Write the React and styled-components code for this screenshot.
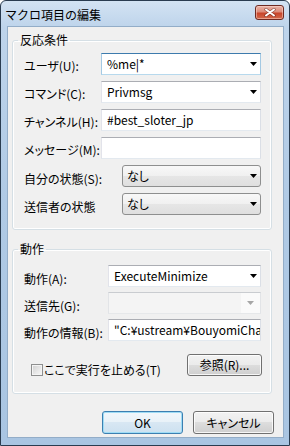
import styled, { createGlobalStyle, css } from 'styled-components'

const GlobalStyle = createGlobalStyle`
  html, body {
    margin: 0;
    padding: 0;
    background: #ffffff;
  }
  body {
    font-family: "Noto Sans CJK JP", "Noto Sans", sans-serif;
    font-size: 12px;
    font-feature-settings: "palt" 1;
    color: #000;
  }
  * { box-sizing: border-box; }
`

const Window = styled.div`
  width: 290px;
  height: 446px;
  border: 1px solid #2a3c50;
  border-radius: 6px 6px 0 0;
  background: linear-gradient(180deg, #d3e3f3 0px, #bed4eb 26px, #b0cae5 200px, #a9c5e2 100%);
  display: flex;
  flex-direction: column;
  overflow: hidden;
`

const TitleBar = styled.div`
  height: 26px;
  flex: none;
  display: flex;
  align-items: center;
  justify-content: space-between;
  padding: 0 5px 0 4px;
`

const Title = styled.span`
  font-size: 12px;
  line-height: 16px;
  padding-top: 1px;
  color: #000;
  font-feature-settings: normal;
`

const CloseButton = styled.div`
  align-self: flex-start;
  margin-top: 4px;
  width: 29px;
  height: 15px;
  border: 1px solid #6e2a22;
  border-radius: 3px;
  background: linear-gradient(180deg, #eab4a8 0%, #dc8b79 45%, #c8452b 55%, #d2694c 100%);
  box-shadow: inset 0 0 0 1px rgba(255, 220, 210, 0.5);
  display: flex;
  align-items: center;
  justify-content: center;
`

const Client = styled.div`
  flex: 1;
  margin: 0 6px 8px 7px;
  background: #f0f0f0;
  box-shadow: 0 0 0 1px #93adc8;
  display: flex;
  flex-direction: column;
  padding: 5px 9px 0 4px;
`

const Group = styled.fieldset`
  margin: ${p => p.$mt || 0}px 2px 0 0;
  padding: ${p => p.$pt}px 10px ${p => p.$pb}px 11px;
  border: 1px solid #d5dfe5;
  border-radius: 3px;
  box-shadow: inset 0 0 0 1px #ffffff;
  min-width: 0;
`

const Legend = styled.legend`
  margin-left: -6px;
  padding: 0 2px;
  font-size: 12px;
  line-height: 16px;
`

const Rows = styled.div`
  display: flex;
  flex-direction: column;
  gap: ${p => p.$gap}px;
`

const Row = styled.div`
  display: grid;
  grid-template-columns: ${p => p.$label}px 1fr;
  align-items: center;
  height: 22px;
`

const Label = styled.span`
  white-space: nowrap;
  font-size: 12px;
  line-height: 16px;
  padding-top: ${p => p.$drop || 3}px;
`

const fieldBorders = {
  edit: css`
    background: #ffffff;
    border-color: #abadb3 #dbdfe6 #e3e9ef #e2e3ea;
  `,
  focus: css`
    background: #ffffff;
    border-color: #3d7bad #a4c9e3 #b7d9ed #a4c9e3;
  `,
  list: css`
    border-color: #8e8f8f;
    border-radius: 3px;
    background: linear-gradient(180deg, #f8f8f8 0%, #f0f0f0 50%, #e6e6e6 50%, #dfdfdf 100%);
  `,
  disabled: css`
    background: #f4f4f4;
    border-color: #c9ccd0 #e2e4e7 #e6e8ea #e2e4e7;
  `,
}

const Field = styled.div`
  height: 22px;
  border: 1px solid;
  display: flex;
  align-items: center;
  padding-left: ${p => p.$pad ?? 5}px;
  min-width: 0;
  ${p => fieldBorders[p.$variant || 'edit']}
`

const FieldText = styled.span`
  flex: 1;
  min-width: 0;
  overflow: hidden;
  white-space: nowrap;
  font-size: 12px;
  line-height: 18px;
`

const ArrowBox = styled.span`
  flex: none;
  width: ${p => p.$w || 14}px;
  height: 100%;
  display: flex;
  align-items: center;
  justify-content: center;
  background: ${p => p.$bg || 'transparent'};
`

const ActionRow = styled.div`
  display: flex;
  justify-content: space-between;
  align-items: flex-start;
  margin-top: 13px;
`

const CheckLabel = styled.label`
  display: flex;
  align-items: center;
  margin: 8px 0 0 7px;
  font-size: 12px;
  line-height: 16px;
`

const CheckBox = styled.span`
  width: 12px;
  height: 12px;
  margin-right: 1px;
  border: 1px solid #8e8f8f;
  background: linear-gradient(135deg, #cfcfcf 0%, #e9e9e9 60%, #f7f7f7 100%);
  box-shadow: inset 0 0 0 1px #f4f4f4;
`

const Button = styled.button`
  width: ${p => p.$w}px;
  height: ${p => p.$h || 23}px;
  margin: 0;
  padding: 0;
  font-family: "Noto Sans CJK JP", "Noto Sans", sans-serif;
  font-feature-settings: "palt" 1;
  font-size: 12px;
  line-height: 16px;
  color: #000;
  border: 1px solid #707070;
  border-radius: 3px;
  background: linear-gradient(180deg, #f2f2f2 0%, #ebebeb 50%, #dddddd 50%, #cfcfcf 100%);
  box-shadow: inset 0 0 0 1px rgba(255, 255, 255, 0.8);
  ${p => p.$default && css`
    border-color: #3c7fb1;
    background: linear-gradient(180deg, #f2f7fb 0%, #e8f1f8 50%, #d8e7f3 50%, #cde1f0 100%);
    box-shadow: inset 0 0 0 1px #9fdcf5;
  `}
`

const BrowseButton = styled(Button)`
  margin-right: -1px;
`

const Footer = styled.div`
  display: flex;
  justify-content: flex-end;
  gap: 10px;
  margin-top: 17px;
`

function Arrow({ color = '#000' }) {
  return (
    <svg width="7" height="4" viewBox="0 0 7 4">
      <path d="M0 0h7L3.5 4z" fill={color} />
    </svg>
  )
}

function Combo({ value, variant, pad, arrowColor, arrowWidth, arrowBg }) {
  return (
    <Field $variant={variant} $pad={pad}>
      <FieldText>{value}</FieldText>
      <ArrowBox $w={arrowWidth} $bg={arrowBg}>
        <Arrow color={arrowColor} />
      </ArrowBox>
    </Field>
  )
}

export default function App() {
  return (
    <>
      <GlobalStyle />
      <Window>
        <TitleBar>
          <Title>マクロ項目の編集</Title>
          <CloseButton>
            <svg width="12" height="9" viewBox="0 0 12 9">
              <path d="M2 1.5l8 6M10 1.5l-8 6" stroke="#5a1c14" strokeWidth="3.4" strokeLinecap="round" opacity="0.55" />
              <path d="M2 1.5l8 6M10 1.5l-8 6" stroke="#ffffff" strokeWidth="2" strokeLinecap="round" />
            </svg>
          </CloseButton>
        </TitleBar>

        <Client>
          <Group $pt={5} $pb={14}>
            <Legend>反応条件</Legend>
            <Rows $gap={6}>
              <Row $label={77}>
                <Label>ユーザ(U):</Label>
                <Combo value="%me|*" variant="focus" />
              </Row>
              <Row $label={77}>
                <Label>コマンド(C):</Label>
                <Combo value="Privmsg" />
              </Row>
              <Row $label={77}>
                <Label>チャンネル(H):</Label>
                <Field><FieldText>#best_sloter_jp</FieldText></Field>
              </Row>
              <Row $label={77}>
                <Label>メッセージ(M):</Label>
                <Field />
              </Row>
              <Row $label={98}>
                <Label $drop={6}>自分の状態(S):</Label>
                <Combo value="なし" variant="list" pad={4} />
              </Row>
              <Row $label={98}>
                <Label $drop={6}>送信者の状態</Label>
                <Combo value="なし" variant="list" pad={4} />
              </Row>
            </Rows>
          </Group>

          <Group $mt={11} $pt={8} $pb={15}>
            <Legend>動作</Legend>
            <Rows $gap={5}>
              <Row $label={84}>
                <Label $drop={5}>動作(A):</Label>
                <Combo value="ExecuteMinimize" />
              </Row>
              <Row $label={84}>
                <Label $drop={5}>送信先(G):</Label>
                <Combo value="" variant="disabled" arrowColor="#a6a6a6" arrowWidth={19} arrowBg="#fafafa" />
              </Row>
              <Row $label={84}>
                <Label $drop={5}>動作の情報(B):</Label>
                <Field>
                  <FieldText>"C:¥ustream¥BouyomiChan¥BouyomiChan.exe"</FieldText>
                </Field>
              </Row>
            </Rows>
            <ActionRow>
              <CheckLabel>
                <CheckBox />
                ここで実行を止める(T)
              </CheckLabel>
              <BrowseButton $w={75} $h={22}>参照(R)...</BrowseButton>
            </ActionRow>
          </Group>

          <Footer>
            <Button $w={81} $default>OK</Button>
            <Button $w={81}>キャンセル</Button>
          </Footer>
        </Client>
      </Window>
    </>
  )
}
